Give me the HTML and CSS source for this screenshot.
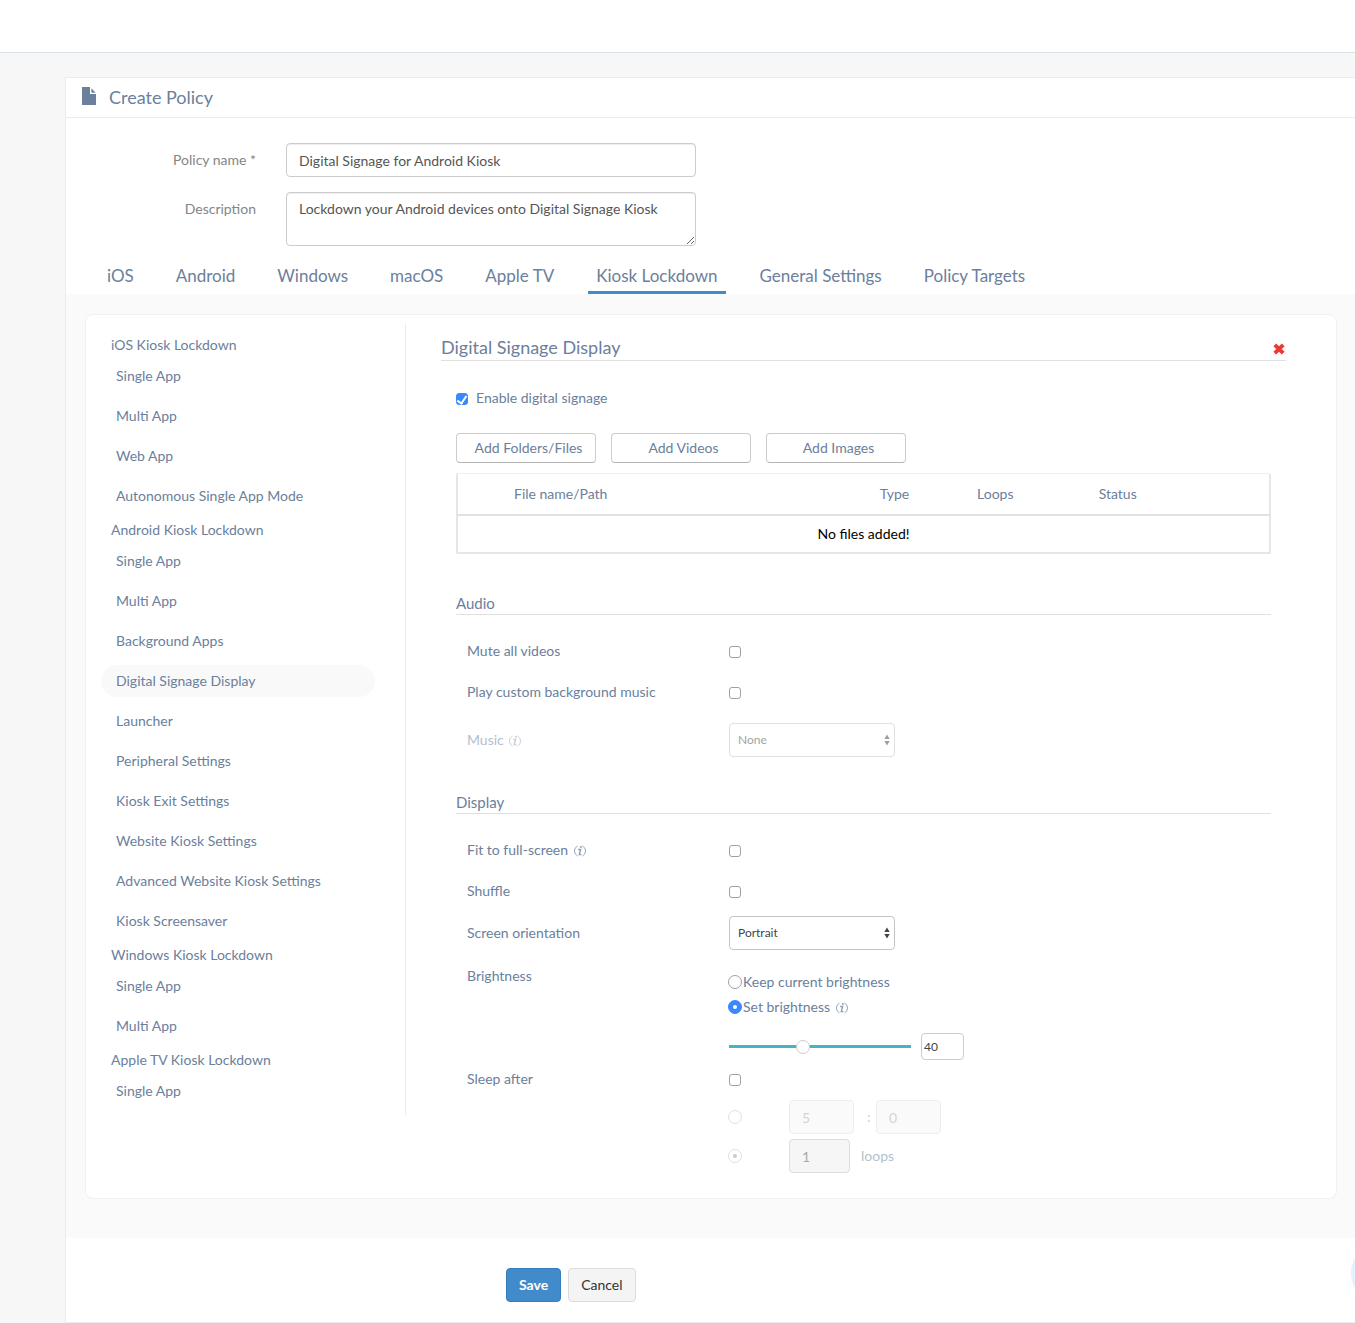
FILE: index.html
```html
<!DOCTYPE html>
<html lang="en">
  <head>
    <meta charset="UTF-8">
    <meta name="viewport" content="width=device-width, initial-scale=1">
    <title>Create Policy</title>
    <link rel="stylesheet" href="styles.css">
  </head>

  <body>

	<!-- shared icons -->
	<svg class="sprite" aria-hidden="true">
		<symbol id="info" viewBox="0 0 12 12">
			<path d="M3.6 1A5.5 5.5 0 0 0 3.6 11M8.4 1A5.5 5.5 0 0 1 8.4 11" fill="none" stroke="currentColor" stroke-width=".9"/>
			<path d="M4.2 4.5H6.6L5.3 9.6H7.4" fill="none" stroke="currentColor" stroke-width="1.4"/>
			<circle cx="6.9" cy="2" r="1" fill="currentColor"/>
		</symbol>
		<symbol id="arrows" viewBox="0 0 6 12">
			<path d="M3 .5L5.7 5H.3ZM3 11.5L5.7 7H.3Z" fill="currentColor"/>
		</symbol>
	</svg>

	<header class="topbar"></header>

	<form class="panel">
		<div class="panel-head">
			<svg class="file-icon" viewBox="0 0 14 18" aria-hidden="true"><path d="M0 0H8V7H14V18H0ZM9.4 1.2L13.6 5.8H9.4Z" fill="currentColor"/></svg>
			<h1>Create Policy</h1>
		</div>

		<div class="fields">
			<div class="field">
				<label for="policy-name">Policy name *</label>
				<input id="policy-name" class="control" type="text" value="Digital Signage for Android Kiosk">
			</div>
			<div class="field">
				<label for="description">Description</label>
				<textarea id="description" class="control">Lockdown your Android devices onto Digital Signage Kiosk</textarea>
			</div>
		</div>

		<nav class="tabs">
			<a href="#">iOS</a>
			<a href="#">Android</a>
			<a href="#">Windows</a>
			<a href="#">macOS</a>
			<a href="#">Apple TV</a>
			<a href="#" class="active">Kiosk Lockdown</a>
			<a href="#">General Settings</a>
			<a href="#">Policy Targets</a>
		</nav>

		<div class="workspace">
			<div class="card">

				<nav class="side">
					<h3>iOS Kiosk Lockdown</h3>
					<a href="#">Single App</a>
					<a href="#">Multi App</a>
					<a href="#">Web App</a>
					<a href="#">Autonomous Single App Mode</a>
					<h3>Android Kiosk Lockdown</h3>
					<a href="#">Single App</a>
					<a href="#">Multi App</a>
					<a href="#">Background Apps</a>
					<a href="#" class="current">Digital Signage Display</a>
					<a href="#">Launcher</a>
					<a href="#">Peripheral Settings</a>
					<a href="#">Kiosk Exit Settings</a>
					<a href="#">Website Kiosk Settings</a>
					<a href="#">Advanced Website Kiosk Settings</a>
					<a href="#">Kiosk Screensaver</a>
					<h3>Windows Kiosk Lockdown</h3>
					<a href="#">Single App</a>
					<a href="#">Multi App</a>
					<h3>Apple TV Kiosk Lockdown</h3>
					<a href="#">Single App</a>
				</nav>

				<section class="main">
					<div class="title">
						<h2>Digital Signage Display</h2>
						<button type="button" class="remove" aria-label="Remove">
							<svg viewBox="0 0 12 12"><path d="M1.8 1.8L10.2 10.2M10.2 1.8L1.8 10.2" stroke="currentColor" stroke-width="4" fill="none"/></svg>
						</button>
					</div>

					<div class="content">
						<div class="enable">
							<input id="enable" type="checkbox" checked>
							<label for="enable">Enable digital signage</label>
						</div>

						<div class="adders">
							<button type="button">Add Folders/Files</button>
							<button type="button">Add Videos</button>
							<button type="button">Add Images</button>
						</div>

						<table class="files">
							<thead>
								<tr>
									<th class="col-name">File name/Path</th>
									<th class="col-type">Type</th>
									<th class="col-loops">Loops</th>
									<th>Status</th>
								</tr>
							</thead>
							<tbody>
								<tr>
									<td colspan="4">No files added!</td>
								</tr>
							</tbody>
						</table>

						<h4 class="audio">Audio</h4>
						<div class="rows">
							<div class="row">
								<label for="mute">Mute all videos</label>
								<input id="mute" type="checkbox">
							</div>
							<div class="row">
								<label for="custom">Play custom background music</label>
								<input id="custom" type="checkbox">
							</div>
							<div class="row music disabled">
								<label for="music">Music <svg class="info"><use href="#info"/></svg></label>
								<span class="select">
									<select id="music" disabled><option>None</option></select>
									<svg><use href="#arrows"/></svg>
								</span>
							</div>
						</div>

						<h4>Display</h4>
						<div class="rows">
							<div class="row">
								<label for="fit">Fit to full-screen <svg class="info"><use href="#info"/></svg></label>
								<input id="fit" type="checkbox">
							</div>
							<div class="row">
								<label for="shuffle">Shuffle</label>
								<input id="shuffle" type="checkbox">
							</div>
							<div class="row orientation">
								<label for="orientation">Screen orientation</label>
								<span class="select">
									<select id="orientation"><option>Portrait</option><option>Landscape</option></select>
									<svg><use href="#arrows"/></svg>
								</span>
							</div>
							<div class="row brightness">
								<span class="row-label">Brightness</span>
								<div class="options">
									<label><input type="radio" name="brightness">Keep current brightness</label>
									<label><input type="radio" name="brightness" checked>Set brightness <svg class="info"><use href="#info"/></svg></label>
									<div class="level">
										<input type="range" min="0" max="100" value="40" aria-label="Brightness">
										<input type="text" value="40" aria-label="Brightness value">
									</div>
								</div>
							</div>
							<div class="row sleep-after">
								<label for="sleep">Sleep after</label>
								<input id="sleep" type="checkbox">
							</div>
							<div class="sleep faded">
								<input type="radio" name="sleep-mode" aria-label="Sleep after time" disabled>
								<input class="control" type="text" value="5" aria-label="Hours" disabled>
								<span class="colon">:</span>
								<input class="control" type="text" value="0" aria-label="Minutes" disabled>
							</div>
							<div class="sleep">
								<input type="radio" name="sleep-mode" aria-label="Sleep after loops" checked disabled>
								<input id="loops" class="control short" type="text" value="1" disabled>
								<label for="loops">loops</label>
							</div>
						</div>
					</div>
				</section>

			</div>
		</div>

		<div class="actions">
			<button type="submit" class="save">Save</button>
			<button type="button" class="cancel">Cancel</button>
		</div>
	</form>

	<button type="button" class="chat" aria-label="Chat"></button>

  </body>
</html>
```
FILE: styles.css
```css
* {
	box-sizing: border-box;
}
body {
	margin: 0;
	background-color: #f7f7f7;
	color: #6b809c;
	font: 14px/20px Lato, "Liberation Sans", sans-serif;
	overflow-x: hidden;
}
h1, h2, h3, h4 {
	margin: 0;
	font-weight: normal;
}
a {
	color: inherit;
	text-decoration: none;
}
input, select, textarea, button {
	margin: 0;
	font: inherit;
	color: inherit;
}
.sprite {
	display: none;
}

.topbar {
	height: 53px;
	background-color: #fff;
	border-bottom: 1px solid #d9e2e9;
}
.panel {
	margin: 24px 0 0 65px;
	background-color: #fff;
	border: 1px solid #ebebeb;
	border-right: 0;
}
.panel-head {
	display: flex;
	align-items: center;
	gap: 13px;
	height: 40px;
	padding: 0 0 2px 16px;
	border-bottom: 1px solid #ebebeb;
}
.panel-head h1 {
	font-size: 18px;
}
.file-icon {
	width: 14px;
	height: 18px;
	margin-bottom: 2px;
}

/* name and description */
.fields {
	display: flex;
	flex-direction: column;
	gap: 15px;
	padding-top: 25px;
}
.field {
	display: flex;
	gap: 30px;
}
.field label {
	width: 190px;
	padding-top: 7px;
	text-align: right;
	color: #858585;
}
.control {
	height: 34px;
	padding: 6px 12px;
	border: 1px solid #ccc;
	border-radius: 4px;
	background-color: #fff;
	color: #555;
}
.field .control {
	width: 410px;
	box-shadow: inset 0 1px 1px #eee;
}
textarea.control {
	height: 54px;
	resize: vertical;
}

.tabs {
	display: flex;
	gap: 26px;
	padding: 18px 0 0 33px;
	font-size: 17px;
	line-height: 24px;
}
.tabs a {
	padding: 0 8px 3px;
	border-bottom: 3px solid transparent;
}
.tabs .active {
	border-color: #428bca;
}

.workspace {
	padding: 20px 18px 39px 19px;
	background-color: #fafafa;
}
.card {
	display: flex;
	align-items: flex-start;
	padding: 9px 50px 25px 15px;
	background-color: #fff;
	border: 1px solid #f0f0f0;
	border-radius: 8px;
}

.side {
	width: 305px;
	padding: 11px 30px 0 0;
	border-right: 1px solid #ebebeb;
}
.side h3 {
	margin-bottom: 5px;
	padding-left: 10px;
	font-size: 14px;
}
.side a {
	display: block;
	margin-bottom: 8px;
	padding: 6px 15px;
	border-radius: 16px;
}
.side .current {
	background-color: #f9f9f9;
}

.main {
	flex: 1;
	padding: 10px 0 0 35px;
}
.title {
	display: flex;
	justify-content: space-between;
	align-items: center;
	border-bottom: 1px solid #e0e0e0;
}
.title h2 {
	font-size: 18px;
	line-height: 26px;
}
.remove {
	display: flex;
	padding: 4px 1px 0;
	border: 0;
	background: none;
	color: #ee3a33;
}
.remove svg {
	width: 12px;
	height: 12px;
}
.content {
	padding: 27px 15px 0;
}
.enable {
	display: flex;
	align-items: center;
	gap: 8px;
}
.adders {
	display: flex;
	gap: 15px;
	margin: 25px 0 10px;
}
.adders button {
	width: 140px;
	height: 30px;
	padding: 0 0 0 5px;
	border: 1px solid #ccc;
	border-bottom-color: #b5b5b5;
	border-radius: 4px;
	background-color: #fff;
}

.files {
	width: 100%;
	border: 2px solid #e6e6e8;
	border-top: 1px solid #efefef;
	border-spacing: 0;
	border-radius: 2px;
	table-layout: fixed;
}
.files th {
	height: 42px;
	padding: 0;
	border-bottom: 2px solid #e2e2e2;
	font-weight: normal;
	text-align: left;
}
.files td {
	height: 36px;
	padding: 0;
	text-align: center;
	color: #000;
}
.files .col-name {
	width: 52%;
	padding-left: 56px;
}
.files .col-type {
	width: 12%;
}
.files .col-loops {
	width: 15%;
}

h4 {
	margin-top: 25px;
	padding-bottom: 2px;
	border-bottom: 1px solid #e0e0e0;
	font-size: 15px;
	line-height: 18px;
}
h4.audio {
	margin-top: 40px;
}
.rows {
	padding: 15px 0 0 11px;
}
.row {
	display: flex;
	align-items: center;
	min-height: 41px;
}
.row > label, .row-label {
	width: 262px;
}
.row.music {
	min-height: 56px;
}
.row.orientation {
	min-height: 43px;
}
.disabled > * {
	opacity: .5;
}
.info {
	width: 12px;
	height: 12px;
	margin-left: 2px;
	vertical-align: -2px;
	opacity: .75;
}

/* tick boxes and radios */
input[type=checkbox], input[type=radio] {
	display: grid;
	place-items: center;
	flex: none;
	appearance: none;
	width: 12px;
	height: 12px;
	border: 1px solid #a0a0a0;
	border-radius: 3px;
	background-color: #fff;
}
input[type=checkbox] {
	position: relative;
	top: 1px;
}
input[type=radio] {
	width: 14px;
	height: 14px;
	border-radius: 50%;
}
input[type=checkbox]:checked, input[type=radio]:checked {
	border-color: #3b88fd;
	background-color: #3b88fd;
}
input[type=checkbox]:checked::after {
	content: "";
	width: 4px;
	height: 8px;
	margin-bottom: 2px;
	border: solid #fff;
	border-width: 0 2px 2px 0;
	transform: rotate(35deg);
}
input[type=radio]:checked::after {
	content: "";
	width: 4px;
	height: 4px;
	border-radius: 50%;
	background-color: #fff;
}
input[type=radio]:disabled {
	border-color: #e0e0e0;
	background-color: #fff;
}
input[type=radio]:disabled::after {
	background-color: #ccc;
}

.select {
	position: relative;
	display: flex;
	color: #444;
}
.select select {
	appearance: none;
	width: 166px;
	height: 34px;
	padding: 0 8px;
	border: 1px solid #c4c4c4;
	border-radius: 4px;
	background-color: #fff;
	font-size: 12px;
	opacity: 1;
}
.select svg {
	position: absolute;
	right: 5px;
	top: 11px;
	width: 6px;
	height: 12px;
	pointer-events: none;
}

.row.brightness {
	align-items: flex-start;
}
.brightness .row-label {
	padding-top: 12px;
}
.options {
	padding-top: 15px;
}
.options label {
	display: flex;
	align-items: center;
	gap: 1px;
	height: 25px;
	margin-left: -1px;
}
.options .info {
	margin: 2px 0 0 5px;
}
.level {
	display: flex;
	align-items: center;
	gap: 10px;
	margin-top: 14px;
}
.level input[type=range] {
	appearance: none;
	width: 182px;
	height: 14px;
	background: linear-gradient(#48b3c4, #48b3c4) center / 100% 3px no-repeat;
}
.level input[type=range]::-webkit-slider-thumb {
	appearance: none;
	width: 14px;
	height: 14px;
	border: 1px solid #ccc;
	border-radius: 50%;
	background-color: #fff;
}
.level input[type=text] {
	width: 43px;
	height: 27px;
	padding: 0 2px;
	border: 1px solid #ccc;
	border-radius: 4px;
	color: #444;
	font-size: 12px;
}

.row.sleep-after {
	min-height: 38px;
	margin-bottom: 2px;
}
.sleep {
	display: flex;
	align-items: center;
	margin-bottom: 5px;
	padding-left: 261px;
}
.sleep:last-child {
	margin-bottom: 0;
}
.sleep .control {
	width: 65px;
	background-color: #f6f6f6;
	border-color: #ddd;
	color: #aaa;
}
.sleep input[type=radio] {
	margin-right: 47px;
}
.sleep .control.short {
	width: 61px;
}
.sleep label {
	margin-left: 11px;
	color: #b5bfcd;
}
.faded .control {
	opacity: .5;
}
.colon {
	width: 22px;
	padding-left: 13px;
	color: #ccc;
}

.actions {
	display: flex;
	gap: 7px;
	padding: 30px 0 20px 440px;
}
.actions button {
	height: 34px;
	padding: 0 12px;
	border: 1px solid #dcdcdc;
	border-radius: 4px;
	background-color: #f4f4f4;
	color: #333;
}
.actions .save {
	border-color: #357ebd;
	background-color: #428bca;
	color: #fff;
	font-weight: bold;
}

/* chat bubble peeking in from the edge */
.chat {
	position: fixed;
	right: -56px;
	bottom: 20px;
	width: 60px;
	height: 60px;
	border: 0;
	border-radius: 50%;
	background-color: #e5effd;
	box-shadow: 0 0 16px rgba(0, 0, 0, .02);
}
```
